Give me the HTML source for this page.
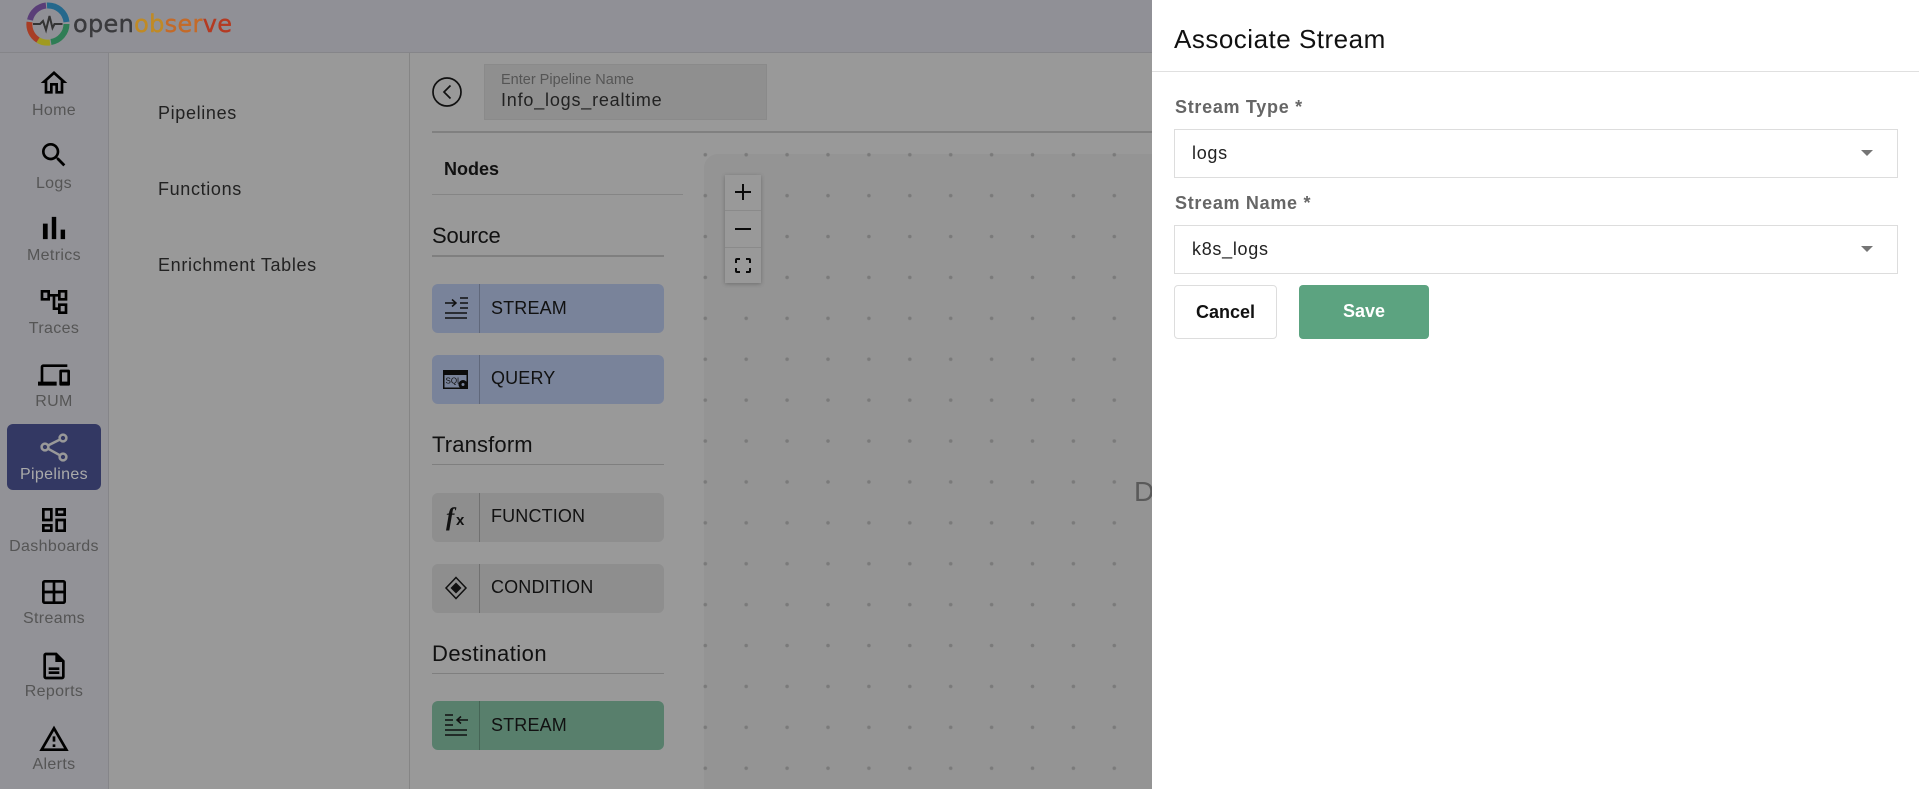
<!DOCTYPE html>
<html><head><meta charset="utf-8"><style>
*{box-sizing:border-box;margin:0;padding:0}
html,body{width:1919px;height:789px;overflow:hidden;background:#999;font-family:"Liberation Sans",sans-serif}
.a{position:absolute;white-space:nowrap}
#hdr{left:0;top:0;width:1152px;height:53px;background:#909096;border-bottom:1px solid #858589}
#side{left:0;top:53px;width:109px;height:736px;background:#929297;border-right:1px solid #858589}
.ic{position:absolute;left:38px;width:32px;height:32px;fill:#000}
.lb{position:absolute;left:0;width:108px;text-align:center;font-size:16px;line-height:20px;color:#555;letter-spacing:.35px}
.m{font-size:18px;line-height:24px;color:#222;left:158px;letter-spacing:.65px}
.sec{left:432px;font-size:22px;line-height:28px;color:#111;letter-spacing:0}
.ln{left:432px;width:232px;height:1px;background:#7f7f7f}
.nb{left:432px;width:232px;height:49px;border-radius:6px}
.nb i{position:absolute;left:47px;top:0;width:1px;height:100%;background:rgba(0,0,0,.2)}
.nb span{position:absolute;left:59px;top:1px;line-height:46px;font-size:18px;color:#111;letter-spacing:.15px}
.nb svg{position:absolute;left:0;top:0}
.blue{background:#79839a}.gray{background:#8e8e8e}.green{background:#587f6c}
#cv{left:704px;top:154px;width:448px;height:635px;background:#949494;border-top-left-radius:14px}
#dots{left:700px;top:150px;width:452px;height:639px}
#ctl{left:725px;top:175px;width:36px;height:108px;background:#999;box-shadow:0 1px 4px rgba(0,0,0,.25)}
#dr{left:1152px;top:0;width:767px;height:789px;background:#fff}
.fld{position:absolute;left:22px;width:724px;height:49px;border:1px solid #ddd;font-size:18px;line-height:46px;padding-left:17px;color:#222;letter-spacing:.7px}
.fld b{position:absolute;left:686px;top:20px;width:0;height:0;border-left:6.5px solid transparent;border-right:6.5px solid transparent;border-top:6.5px solid #757575}
.fl{position:absolute;left:23px;font-size:18px;font-weight:700;line-height:24px;color:#666;letter-spacing:.7px}
</style></head><body>

<div class="a" id="hdr"></div>
<svg class="a" style="left:25px;top:1px" width="46" height="46" viewBox="0 0 46 46" fill="none" stroke-width="6">
<path d="M5 19A18.5 18.5 0 0 1 21 4.500" stroke="#5a3e78"/>
<path d="M22 4.500A18.500 18.500 0 0 1 41.500 21" stroke="#25688c"/>
<path d="M41.500 23A18.500 18.500 0 0 1 26 41" stroke="#2f7d55"/>
<path d="M25 41.500A18.500 18.500 0 0 1 13 39" stroke="#a09a20"/>
<path d="M13 39A18.500 18.500 0 0 1 4.500 21" stroke="#a83d25"/>
<path d="M8 23h7l3-3 3 9 3.500-14 3 12 2-4h8" stroke="#333" stroke-width="2"/>
</svg>
<div class="a" style="left:73px;top:5px;font-size:24px;line-height:38px;color:#3a3a3d;font-family:'DejaVu Sans',sans-serif;letter-spacing:.3px;font-weight:400;-webkit-text-stroke:.4px">open<span style="color:#c08a25">ob</span><span style="color:#c46a28">ser</span><span style="color:#b43a22">ve</span></div>

<div class="a" id="side">
<svg class="ic" style="top:14px" viewBox="0 0 24 24"><path d="M12 5.690l5 4.500V18h-2v-6H9v6H7v-7.810l5-4.500M12 3L2 12h3v8h6v-6h2v6h6v-8h3L12 3z"/></svg>
<div class="lb" style="top:48px">Home</div>
<svg class="ic" style="top:86px" viewBox="0 0 24 24"><path d="M15.500 14h-.79l-.28-.27C15.410 12.590 16 11.110 16 9.500 16 5.910 13.090 3 9.500 3S3 5.910 3 9.500 5.910 16 9.500 16c1.610 0 3.090-.59 4.230-1.570l.27.28v.79l5 4.990L20.490 19l-4.990-5zm-6 0C7.010 14 5 11.990 5 9.500S7.010 5 9.500 5 14 7.010 14 9.500 11.990 14 9.500 14z"/></svg>
<div class="lb" style="top:121px">Logs</div>
<svg class="ic" style="top:156px;left:35px;width:38px;height:38px" viewBox="0 0 24 24"><path d="M5 9.200h3V19H5zM10.600 5h2.800v14h-2.800zm5.600 8H19v6h-2.800z"/></svg>
<div class="lb" style="top:193px">Metrics</div>
<svg class="ic" style="top:233px" viewBox="0 0 24 24"><path d="M22 11V3h-7v3H9V3H2v8h7V8h2v10h4v3h7v-8h-7v3h-2V8h2v3h7zM7 9H4V5h3v4zm10 6h3v4h-3v-4zm0-10h3v4h-3V5z"/></svg>
<div class="lb" style="top:266px">Traces</div>
<svg class="ic" style="top:306px" viewBox="0 0 24 24"><path d="M4 6h18V4H4c-1.100 0-2 .9-2 2v11H0v3h14v-3H4V6zm19 2h-6c-.55 0-1 .45-1 1v10c0 .55.45 1 1 1h6c.55 0 1-.45 1-1V9c0-.55-.45-1-1-1zm-1 9h-4v-7h4v7z"/></svg>
<div class="lb" style="top:339px">RUM</div>
<div style="position:absolute;left:7px;top:371px;width:94px;height:66px;background:#333863;border-radius:6px"></div>
<svg style="position:absolute;left:38px;top:378px" width="32" height="32" viewBox="0 0 32 32" fill="none" stroke="#999" stroke-width="2.500"><circle cx="25" cy="7" r="3.400"/><circle cx="7" cy="16" r="3.400"/><circle cx="25" cy="26" r="3.400"/><path d="M10 14.500L22 8.500M10 17.700L22 24.300"/></svg>
<div class="lb" style="top:412px;color:#aaa">Pipelines</div>
<svg class="ic" style="top:451px" viewBox="0 0 24 24"><path d="M19 5v2h-4V5h4M9 5v6H5V5h4m10 8v6h-4v-6h4M9 17v2H5v-2h4M21 3h-8v6h8V3zM11 3H3v10h8V3zm10 8h-8v10h8V11zm-10 4H3v6h8v-6z"/></svg>
<div class="lb" style="top:484px">Dashboards</div>
<svg class="ic" style="top:523px" viewBox="0 0 24 24"><path d="M5 3h14a2 2 0 0 1 2 2v14a2 2 0 0 1-2 2H5a2 2 0 0 1-2-2V5a2 2 0 0 1 2-2zm0 2v6h6V5H5zm8 0v6h6V5h-6zm-8 8v6h6v-6H5zm8 0v6h6v-6h-6z" fill-rule="evenodd"/></svg>
<div class="lb" style="top:556px">Streams</div>
<svg class="ic" style="top:597px" viewBox="0 0 24 24"><path d="M8 13h8v2H8zm0 3h8v2H8zm6-14H6c-1.100 0-2 .9-2 2v16c0 1.100.89 2 1.990 2H18c1.100 0 2-.9 2-2V8l-6-6zm4 18H6V4h7v5h5v11z"/></svg>
<div class="lb" style="top:629px">Reports</div>
<svg class="ic" style="top:670px" viewBox="0 0 24 24"><path d="M12 5.990L19.530 19H4.470L12 5.990M12 2L1 21h22L12 2zm1 14h-2v2h2v-2zm0-6h-2v4h2v-4z"/></svg>
<div class="lb" style="top:702px">Alerts</div>
</div>

<div class="a m" style="top:101px">Pipelines</div>
<div class="a m" style="top:177px">Functions</div>
<div class="a m" style="top:253px">Enrichment Tables</div>
<div class="a" style="left:409px;top:53px;width:1px;height:736px;background:#858585"></div>

<svg class="a" style="left:432px;top:77px" width="30" height="30" viewBox="0 0 30 30" fill="none" stroke="#111"><circle cx="15" cy="15" r="14" stroke-width="1.700"/><path d="M18.500 8.500L12 15l6.500 6.500" stroke-width="1.700"/></svg>
<div class="a" style="left:484px;top:64px;width:283px;height:56px;background:#8f8f8f;border:1px solid #8a8a8a"></div>
<div class="a" style="left:501px;top:71px;font-size:14.500px;line-height:18px;color:#555;letter-spacing:0">Enter Pipeline Name</div>
<div class="a" style="left:501px;top:88px;font-size:18px;line-height:24px;color:#222;letter-spacing:.8px">Info_logs_realtime</div>
<div class="a" style="left:432px;top:131px;width:720px;height:2px;background:#808080"></div>

<div class="a" style="left:444px;top:157px;font-size:18px;font-weight:700;line-height:24px;color:#111">Nodes</div>
<div class="a" style="left:432px;top:194px;width:251px;height:1px;background:#858585"></div>

<div class="a sec" style="top:222px;letter-spacing:-.2px">Source</div>
<div class="a ln" style="top:255px;height:2px"></div>
<div class="a nb blue" style="top:284px"><svg width="47" height="49" fill="none" stroke="#111" stroke-width="1.500"><path d="M13 19h11m-4-3.500l4 3.500-4 3.500M28 14h8M28 19h8M28 24h8M13 29h22M13 34h22"/></svg><i></i><span>STREAM</span></div>
<div class="a nb blue" style="top:355px"><svg width="47" height="49"><rect x="11" y="15" width="25" height="19" fill="#0c0c0c"/><rect x="12.500" y="20" width="22" height="12.500" fill="#79839a"/><text x="13.500" y="28.500" font-size="8" font-family="Liberation Sans" fill="#111">SQL</text><circle cx="31" cy="29.500" r="4.500" fill="#0c0c0c"/><circle cx="31" cy="29.500" r="1.500" fill="#79839a"/></svg><i></i><span style="top:0">QUERY</span></div>

<div class="a sec" style="top:431px;letter-spacing:.15px">Transform</div>
<div class="a ln" style="top:464px"></div>
<div class="a nb gray" style="top:493px"><svg width="47" height="49"><text x="14" y="32" font-size="25" font-family="Liberation Serif" font-weight="700" font-style="italic" fill="#111">f</text><text x="24" y="32" font-size="15" font-family="Liberation Sans" font-weight="700" fill="#111">x</text></svg><i></i><span style="top:0">FUNCTION</span></div>
<div class="a nb gray" style="top:564px"><svg width="47" height="49"><path d="M24 13.500L34 24 24 34.500 14 24z" fill="none" stroke="#111" stroke-width="1.500"/><path d="M24 18.500L29.500 24 24 29.500 18.500 24z" fill="#111"/></svg><i></i><span style="top:0">CONDITION</span></div>

<div class="a sec" style="top:640px;letter-spacing:.45px">Destination</div>
<div class="a ln" style="top:673px"></div>
<div class="a nb green" style="top:701px"><svg width="47" height="49" fill="none" stroke="#111" stroke-width="1.500"><path d="M36 19H25m4-3.500L25 19l4 3.500M13 14h8M13 19h8M13 24h8M13 29h22M13 34h22"/></svg><i></i><span>STREAM</span></div>

<div class="a" id="cv"></div>
<svg class="a" id="dots" viewBox="0 0 452 639"><defs><pattern id="p" x="5.300" y="4.700" width="40.900" height="40.900" patternUnits="userSpaceOnUse"><circle cx="0" cy="0" r="1.800" fill="#7a7a7a"/><circle cx="40.900" cy="0" r="1.800" fill="#7a7a7a"/><circle cx="0" cy="40.900" r="1.800" fill="#7a7a7a"/><circle cx="40.900" cy="40.900" r="1.800" fill="#7a7a7a"/></pattern></defs><rect x="0" y="0" width="452" height="639" fill="url(#p)"/></svg>
<div class="a" id="ctl"></div>
<div class="a" style="left:725px;top:210px;width:36px;height:1px;background:#8a8a8a"></div>
<div class="a" style="left:725px;top:247px;width:36px;height:1px;background:#8a8a8a"></div>
<svg class="a" style="left:725px;top:175px" width="36" height="108" fill="none" stroke="#0a0a0a" stroke-width="2"><path d="M10 17h16M18 9v16M10 54h16M11 88v-3a1 1 0 0 1 1-1h3M21 84h3a1 1 0 0 1 1 1v3M25 93v3a1 1 0 0 1-1 1h-3M15 97h-3a1 1 0 0 1-1-1v-3"/></svg>
<div class="a" style="left:1134px;top:474px;font-size:28px;line-height:36px;color:#5a5a5a;width:18px;overflow:hidden">D</div>

<div class="a" id="dr">
<div class="a" style="left:22px;top:23px;font-size:26px;line-height:32px;color:#111;letter-spacing:.5px">Associate Stream</div>
<div style="position:absolute;left:0;top:71px;width:767px;height:1px;background:#e0e0e0"></div>
<div class="fl" style="top:95px">Stream Type *</div>
<div class="fld" style="top:129px">logs<b></b></div>
<div class="fl" style="top:191px">Stream Name *</div>
<div class="fld" style="top:225px">k8s_logs<b></b></div>
<div style="position:absolute;left:22px;top:285px;width:103px;height:54px;border:1px solid #ddd;border-radius:4px;text-align:center;font-size:18px;font-weight:700;line-height:52px;color:#111">Cancel</div>
<div style="position:absolute;left:147px;top:285px;width:130px;height:54px;background:#5ca380;border-radius:4px;text-align:center;font-size:18px;font-weight:700;line-height:52px;color:#fff">Save</div>
</div>
</body></html>
